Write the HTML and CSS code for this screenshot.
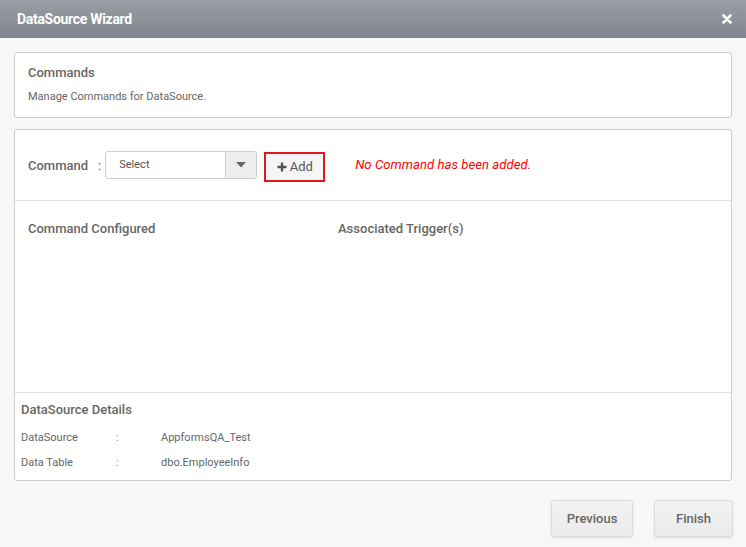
FILE: index.html
```html
<!DOCTYPE html>
<html lang="en">
    <head>
        <meta charset="UTF-8" />
        <title>DataSource Wizard</title>
        <link rel="stylesheet" href="styles.css">
    </head>

    <body>
        <div class="wizard">
            <header class="wizard-header">
                <h1>DataSource Wizard</h1>
                <span class="close">
                    <svg width="10" height="10" viewBox="0 0 10 10">
                        <path d="M1.5 1.5 L8.5 8.5 M8.5 1.5 L1.5 8.5" stroke="#fff" stroke-width="2.6" stroke-linecap="round" />
                    </svg>
                </span>
            </header>

            <div class="wizard-body">
                <section class="card intro">
                    <h2>Commands</h2>
                    <p>Manage Commands for DataSource.</p>
                </section>

                <section class="card main">
                    <div class="command-row">
                        <label class="command-label">Command</label>
                        <span class="colon">:</span>
                        <div class="select">
                            <span class="select-text">Select</span>
                            <span class="select-arrow">
                                <svg width="10" height="6" viewBox="0 0 10 6">
                                    <path d="M0 0 L10 0 L5 5.5 Z" fill="#666" />
                                </svg>
                            </span>
                        </div>
                        <div class="add-wrap">
                            <button type="button" class="add-button">
                                <svg width="10" height="10" viewBox="0 0 10 10">
                                    <path d="M5 0.5 V9.5 M0.5 5 H9.5" stroke="#555" stroke-width="2.4" />
                                </svg>
                                Add
                            </button>
                        </div>
                        <span class="no-command">No Command has been added.</span>
                    </div>

                    <div class="configured">
                        <div class="col-head first">Command Configured</div>
                        <div class="col-head">Associated Trigger(s)</div>
                    </div>

                    <div class="details">
                        <h3>DataSource Details</h3>
                        <div class="detail-row">
                            <span class="key">DataSource</span>
                            <span class="sep">:</span>
                            <span class="val">AppformsQA_Test</span>
                        </div>
                        <div class="detail-row">
                            <span class="key">Data Table</span>
                            <span class="sep">:</span>
                            <span class="val">dbo.EmployeeInfo</span>
                        </div>
                    </div>
                </section>
            </div>

            <footer class="wizard-footer">
                <button type="button" class="btn prev">Previous</button>
                <button type="button" class="btn finish">Finish</button>
            </footer>
        </div>
    </body>
</html>
```

FILE: styles.css
```css
body {
    margin: 0;
    font-family: Roboto, "Liberation Sans", sans-serif;
    background-color: #f7f7f7;
    color: #666;
}

.wizard {
    width: 746px;
    height: 547px;
    background-color: #f7f7f7;
}

.wizard-header {
    height: 38px;
    background: linear-gradient(to bottom, #9a9da4, #80858d);
    display: flex;
    align-items: center;
    justify-content: space-between;
    padding: 0 14px 0 17px;
    box-sizing: border-box;
}

.wizard-header h1 {
    margin: 0;
    font-size: 14px;
    font-weight: 700;
    color: #fff;
    letter-spacing: -0.3px;
}

.close {
    display: flex;
    align-items: center;
}

.wizard-body {
    padding: 14px 14px 0 14px;
}

.card {
    background-color: #fff;
    border: 1px solid #ccc;
    border-radius: 3px;
}

.intro {
    height: 66px;
    box-sizing: border-box;
    padding: 12px 13px;
}

.intro h2 {
    margin: 0;
    font-size: 13px;
    font-weight: 500;
    color: #666;
}

.intro p {
    margin: 10px 0 0 0;
    font-size: 11px;
    color: #666;
}

.main {
    margin-top: 11px;
    height: 352px;
    box-sizing: border-box;
    display: flex;
    flex-direction: column;
}

.command-row {
    display: flex;
    align-items: center;
    height: 71px;
    padding: 0 13px;
    border-bottom: 1px solid #dde1e6;
    box-sizing: border-box;
}

.command-label {
    font-size: 13px;
    font-weight: 500;
    color: #666;
}

.colon {
    font-size: 13px;
    margin: 0 4px 0 10px;
    color: #666;
}

.select {
    display: flex;
    width: 152px;
    height: 28px;
    border: 1px solid #ccc;
    border-radius: 3px;
    box-sizing: border-box;
    overflow: hidden;
}

.select-text {
    flex: 1;
    font-size: 11px;
    color: #555;
    padding-left: 13px;
    line-height: 26px;
}

.select-arrow {
    width: 30px;
    background-color: #eee;
    border-left: 1px solid #ccc;
    display: flex;
    align-items: center;
    justify-content: center;
}

.add-wrap {
    margin-left: 7px;
    border: 2px solid #e8141c;
    width: 61px;
    height: 30px;
    box-sizing: border-box;
    margin-top: 3px;
}

.add-button {
    width: 100%;
    height: 100%;
    border: none;
    background-color: #f5f5f5;
    font-family: inherit;
    font-size: 13px;
    color: #555;
    display: flex;
    align-items: center;
    justify-content: center;
    gap: 3px;
    padding: 0;
}

.no-command {
    margin-left: 30px;
    margin-bottom: 1px;
    font-size: 13.2px;
    font-style: italic;
    color: #f00;
}

.configured {
    flex: 1;
    display: flex;
    padding: 20px 13px 0 13px;
    border-bottom: 1px solid #dde1e6;
}

.col-head {
    font-size: 13px;
    font-weight: 500;
    color: #666;
}

.col-head.first {
    width: 310px;
}

.details {
    height: 87px;
    padding: 9px 6px 0 6px;
    box-sizing: border-box;
}

.details h3 {
    margin: 0 0 14px 0;
    font-size: 13px;
    font-weight: 500;
    color: #666;
}

.detail-row {
    display: flex;
    font-size: 11px;
    color: #666;
    height: 25px;
}

.key {
    width: 95px;
}

.sep {
    width: 45px;
    color: #999;
}

.wizard-footer {
    display: flex;
    justify-content: flex-end;
    gap: 21px;
    padding: 19px 13px 0 0;
}

.btn {
    height: 37px;
    border: 1px solid #dcdcdc;
    border-radius: 3px;
    background: linear-gradient(to bottom, #f2f2f2, #ebebeb);
    box-shadow: 0 1px 2px rgba(0, 0, 0, 0.12);
    font-family: inherit;
    font-size: 13px;
    font-weight: 500;
    color: #666;
}

.prev {
    width: 82px;
}

.finish {
    width: 79px;
}
```
